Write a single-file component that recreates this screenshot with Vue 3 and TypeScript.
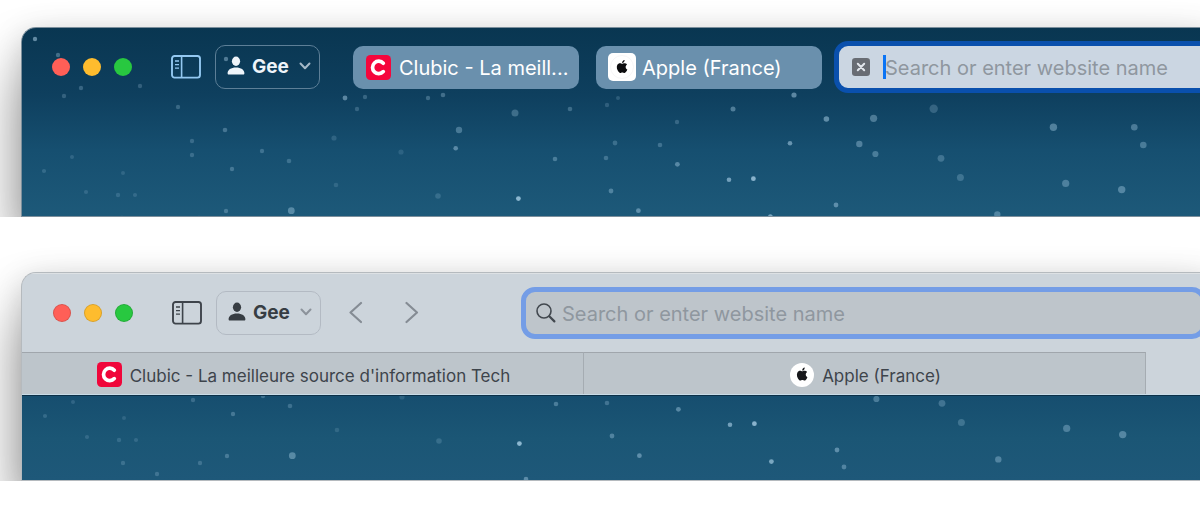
<script setup lang="ts">
interface Star {
  x: number
  y: number
  r: number
  o: number
}

const lights: { name: string; tone: string }[] = [
  { name: 'Close', tone: 'red' },
  { name: 'Minimise', tone: 'amber' },
  { name: 'Zoom', tone: 'green' },
]

const placeholder = 'Search or enter website name'

const applePath =
  'M12.152 6.896c-.948 0-2.415-1.078-3.96-1.04-2.04.027-3.91 1.183-4.961 3.014-2.117 3.675-.546 9.103 1.519 12.09 1.013 1.454 2.208 3.09 3.792 3.039 1.52-.065 2.09-.987 3.935-.987 1.831 0 2.35.987 3.96.948 1.637-.026 2.676-1.48 3.676-2.948 1.156-1.688 1.636-3.325 1.662-3.415-.039-.013-3.182-1.221-3.22-4.857-.026-3.04 2.48-4.494 2.597-4.559-1.429-2.09-3.623-2.324-4.39-2.376-2-.156-3.675 1.09-4.61 1.09zM15.53 3.83c.843-1.012 1.4-2.427 1.245-3.83-1.207.052-2.662.805-3.532 1.818-.78.896-1.454 2.338-1.273 3.714 1.338.104 2.715-.688 3.559-1.701'

const coords: [number, number, number, number][] = [
  [35, 39, 2.2, 0.5], [58, 55, 2.2, 0.32], [81, 88, 2.2, 0.25], [64, 96, 2.2, 0.22], [140, 86, 2.2, 0.22],
  [178, 107, 2.2, 0.24], [226, 59, 2.2, 0.4], [225, 130, 2.3, 0.3], [192, 141, 2.2, 0.22], [192, 155, 2.2, 0.22],
  [72, 157, 2, 0.16], [44, 171, 2.1, 0.18], [123, 173, 2, 0.15], [86, 192, 2.1, 0.16], [118, 195, 2.2, 0.17],
  [135, 195, 2.1, 0.16], [262, 151, 2.2, 0.25], [289, 161, 2.3, 0.24], [232, 169, 2.2, 0.28], [226, 211, 2.2, 0.28],
  [291.3, 210.7, 3.4, 0.38], [345, 98, 2.4, 0.45], [365, 97, 2.2, 0.24], [357, 109, 2.2, 0.22], [334, 138, 2.6, 0.17],
  [336, 185, 2.3, 0.15], [428, 98, 2.2, 0.27], [443, 95, 2.3, 0.3], [401, 152, 2.6, 0.14], [515, 113, 3.5, 0.27],
  [459, 130, 3.2, 0.32], [455.7, 148.3, 2.3, 0.42], [438, 196, 2.8, 0.18], [518.4, 198.6, 2.4, 0.72], [555, 159, 2.3, 0.32],
  [570, 109, 2.3, 0.27], [607, 105, 2.2, 0.19], [618, 98, 2, 0.18], [615, 143, 2.4, 0.24], [606, 158, 2.3, 0.26],
  [611, 191, 2.4, 0.34], [638.4, 210.7, 2.4, 0.42], [660, 145, 2.3, 0.26], [677, 122, 2.2, 0.22], [677.4, 164.3, 2.4, 0.4],
  [733, 109, 2.5, 0.38], [794, 95, 2.6, 0.46], [826.4, 119, 2.8, 0.47], [790, 143.3, 2.3, 0.5], [729, 179.7, 2.3, 0.56],
  [753.4, 178.7, 2.4, 0.7], [873.6, 118.3, 3.6, 0.35], [859.3, 144, 3.2, 0.36], [875.4, 154, 3.1, 0.32], [836, 205, 2.4, 0.42],
  [770.4, 216.6, 2.4, 0.6], [933.7, 108.7, 4.2, 0.22], [941, 158.3, 3.4, 0.26], [960.4, 177.4, 3.5, 0.24], [997.3, 214.4, 3.2, 0.34],
  [1053.4, 127.3, 3.7, 0.38], [1065.7, 183.4, 3.6, 0.33], [1121.7, 189.6, 3.7, 0.37], [1134.3, 127.3, 3.3, 0.34], [1143.3, 145, 3.3, 0.32],
  [1134, 90, 3, 0.3], [122, 218, 2.2, 0.2], [199, 218, 2.2, 0.22], [156, 229, 2.2, 0.22], [525, 234, 2.3, 0.4], [843, 222, 2.4, 0.34],
]

const stars: Star[] = coords.map(([x, y, r, o]) => ({ x, y, r, o }))
</script>

<template>
  <main class="page">
    <section class="shot" aria-label="Compact tab layout">
      <div class="window dark">
        <svg class="stars" aria-hidden="true">
          <g transform="translate(-22 -28)">
            <circle v-for="(s, i) in stars" :key="i" :cx="s.x" :cy="s.y" :r="s.r" :opacity="s.o" />
          </g>
        </svg>
        <header class="toolbar">
          <div class="lights">
            <button v-for="l in lights" :key="l.name" type="button" class="light" :class="l.tone" :aria-label="l.name"></button>
          </div>
          <button type="button" class="icon-button sidebar" aria-label="Show sidebar">
            <svg width="30" height="24" viewBox="0 0 30 24" fill="none" stroke="currentColor">
              <rect x="1" y="1" width="28" height="21.6" rx="2.6" stroke-width="1.9" />
              <path d="M10.6 1v21.6" stroke-width="1.6" />
              <path d="M4 6h4M4 9.6h4M4 13.2h4" stroke-width="1.3" />
            </svg>
          </button>
          <button type="button" class="profile">
            <svg class="person" width="18" height="20" viewBox="0 0 18 20" fill="currentColor">
              <ellipse cx="9" cy="5.2" rx="4.1" ry="4.7" />
              <path d="M.6 17.2C.6 13.6 4 11.4 9 11.4s8.400 2.200 8.400 5.800c0 .9-.4 1.300-1.200 1.300H1.800c-.8 0-1.200-.4-1.200-1.300z" />
            </svg>
            <span>Gee</span>
            <svg class="caret-down" width="12" height="8" viewBox="0 0 12 8" fill="none" stroke="currentColor" stroke-width="2" stroke-linecap="round" stroke-linejoin="round">
              <path d="M1.500 1.500L6 6.200L10.500 1.500" />
            </svg>
          </button>
          <nav class="pills" aria-label="Tabs">
            <button type="button" class="pill">
              <svg class="favicon" width="25" height="25" viewBox="0 0 25 25">
                <rect width="25" height="25" rx="4.500" fill="#f5063c" />
                <path d="M17.300 8.200A6.200 6.200 0 1 0 17.300 16.600" fill="none" stroke="#fff" stroke-width="3.700" stroke-linecap="round" />
              </svg>
              <span>Clubic - La meill...</span>
            </button>
            <button type="button" class="pill apple">
              <svg class="favicon" width="28" height="28" viewBox="0 0 28 28">
                <rect width="28" height="28" rx="5" fill="#fff" />
                <circle cx="14" cy="14" r="11.500" fill="none" stroke="#f0f0f2" stroke-width=".6" />
                <path transform="translate(7.600 7) scale(.54)" :d="applePath" fill="#0c0c0e" />
              </svg>
              <span>Apple (France)</span>
            </button>
          </nav>
          <div class="field compact">
            <button type="button" class="clear" aria-label="Close tab">
              <svg width="18" height="18" viewBox="0 0 18 18">
                <rect width="18" height="18" rx="3.200" fill="#686c73" />
                <path d="M5.800 5.800l6.400 6.400M12.200 5.800l-6.400 6.400" stroke="#e2e6ec" stroke-width="2" stroke-linecap="round" />
              </svg>
            </button>
            <span class="insertion" aria-hidden="true"></span>
            <input type="text" :placeholder="placeholder" aria-label="Address in compact window" />
          </div>
        </header>
      </div>
    </section>

    <section class="shot second" aria-label="Separate tab layout">
      <div class="window pale">
        <header class="toolbar">
          <div class="lights">
            <button v-for="l in lights" :key="l.name" type="button" class="light" :class="l.tone" :aria-label="l.name"></button>
          </div>
          <button type="button" class="icon-button sidebar" aria-label="Show sidebar">
            <svg width="30" height="24" viewBox="0 0 30 24" fill="none" stroke="currentColor">
              <rect x="1" y="1" width="28" height="21.600" rx="2.600" stroke-width="1.900" />
              <path d="M10.600 1v21.600" stroke-width="1.600" />
              <path d="M4 6h4M4 9.600h4M4 13.200h4" stroke-width="1.300" />
            </svg>
          </button>
          <button type="button" class="profile">
            <svg class="person" width="18" height="20" viewBox="0 0 18 20" fill="currentColor">
              <ellipse cx="9" cy="5.200" rx="4.100" ry="4.700" />
              <path d="M.6 17.200C.6 13.600 4 11.400 9 11.400s8.400 2.200 8.400 5.800c0 .9-.4 1.300-1.200 1.300H1.800c-.8 0-1.200-.4-1.200-1.300z" />
            </svg>
            <span>Gee</span>
            <svg class="caret-down" width="12" height="8" viewBox="0 0 12 8" fill="none" stroke="currentColor" stroke-width="2" stroke-linecap="round" stroke-linejoin="round">
              <path d="M1.500 1.500L6 6.200L10.500 1.500" />
            </svg>
          </button>
          <div class="history">
            <button type="button" class="icon-button" aria-label="Back">
              <svg width="14" height="24" viewBox="0 0 14 24" fill="none" stroke="currentColor" stroke-width="2.200" stroke-linecap="round" stroke-linejoin="round">
                <path d="M12 2L1.500 11.500L12 21" />
              </svg>
            </button>
            <button type="button" class="icon-button" aria-label="Forward">
              <svg width="14" height="24" viewBox="0 0 14 24" fill="none" stroke="currentColor" stroke-width="2.200" stroke-linecap="round" stroke-linejoin="round">
                <path d="M1.500 2L12 11.500L1.500 21" />
              </svg>
            </button>
          </div>
          <div class="field wide">
            <svg width="20" height="20" viewBox="0 0 20 20" fill="none" stroke="#42484f" stroke-linecap="round" aria-hidden="true">
              <circle cx="8" cy="8" r="7" stroke-width="1.600" />
              <path d="M13.300 13.300L18.400 18.400" stroke-width="2.200" />
            </svg>
            <input type="text" :placeholder="placeholder" aria-label="Address in separate window" />
          </div>
        </header>
        <nav class="tab-row" aria-label="Tabs">
          <button type="button" class="tab">
            <svg width="25" height="25" viewBox="0 0 25 25">
              <rect width="25" height="25" rx="4.500" fill="#f0063a" />
              <path d="M17.300 8.200A6.200 6.200 0 1 0 17.300 16.600" fill="none" stroke="#fff" stroke-width="3.700" stroke-linecap="round" />
            </svg>
            <span>Clubic - La meilleure source d'information Tech</span>
          </button>
          <button type="button" class="tab">
            <svg width="24" height="24" viewBox="0 0 24 24">
              <circle cx="12" cy="12" r="12" fill="#fff" />
              <path transform="translate(5.700 4.600) scale(.54)" :d="applePath" fill="#17181b" />
            </svg>
            <span>Apple (France)</span>
          </button>
        </nav>
        <div class="sky">
          <svg class="stars" aria-hidden="true">
            <g transform="translate(-21 -151)">
              <circle v-for="(s, i) in stars" :key="i" :cx="s.x" :cy="s.y" :r="s.r" :opacity="s.o" />
            </g>
          </svg>
        </div>
      </div>
    </section>
  </main>
</template>

<style>
body {
  margin: 0;
  background: #fff;
}
</style>

<style scoped>
.page {
  font-family: Inter, "Liberation Sans", sans-serif;
  overflow: hidden;
  padding-bottom: 35px;
}

.page *,
.page {
  box-sizing: border-box;
}

svg {
  display: block;
  flex: none;
}

button {
  font: inherit;
  color: inherit;
  background: none;
  border: 0;
  padding: 0;
  margin: 0;
}

.shot {
  overflow: hidden;
  padding: 27px 0 0 21px;
}

.shot.second {
  padding-top: 55px;
}

.window {
  position: relative;
  margin-right: -12px;
  border-radius: 15px 0 0 0;
  overflow: hidden;
  box-shadow: 0 40px 60px rgba(0, 0, 0, 0.42), 0 6px 30px rgba(0, 0, 0, 0.15);
}

.dark {
  border: 1px solid #7c8f9c;
  border-right: 0;
  min-height: 190px;
  background: linear-gradient(#093651, #0e3f5e 35%, #164f70 65%, #1d5979);
}

.stars {
  position: absolute;
  inset: 0;
  width: 100%;
  height: 100%;
  fill: #b9dcf2;
}

.toolbar {
  position: relative;
  display: flex;
  align-items: center;
  height: 78px;
  padding-left: 30px;
}

.lights {
  display: flex;
  gap: 13px;
  margin-right: 39px;
}

.light {
  width: 18px;
  height: 18px;
  border-radius: 50%;
}

.red {
  background: #ff5f57;
}

.amber {
  background: #febc2e;
}

.green {
  background: #28c840;
}

.pale .light {
  border: 1px solid rgba(0, 0, 0, 0.14);
}

.sidebar {
  color: #93c8f1;
}

.profile {
  display: flex;
  align-items: center;
  height: 44px;
  width: 105px;
  flex: none;
  margin-left: 14px;
  padding: 0 8px 2px 11px;
  border: 1px solid #5d7f97;
  border-radius: 10px;
  font-size: 19px;
  font-weight: 700;
  color: #eef4fa;
}

.person {
  margin-right: 7px;
}

.caret-down {
  margin-left: auto;
  color: #a5b9c8;
}

.pills {
  display: flex;
  gap: 17px;
  margin-left: 33px;
}

.pill {
  display: flex;
  align-items: center;
  gap: 8px;
  width: 226px;
  height: 43px;
  padding-left: 13px;
  border-radius: 10px;
  background: #6a90ad;
  color: #fff;
  font-size: 20px;
  white-space: nowrap;
}

.pill span {
  padding-top: 2px;
}

.pill.apple {
  gap: 6px;
  padding-left: 12px;
}

.field {
  display: flex;
  align-items: center;
  flex: 1;
  min-width: 0;
  height: 52px;
  border: 5px solid #0a50ad;
  border-radius: 14px;
  background: #cbd6e2;
}

.field input {
  flex: 1;
  min-width: 0;
  border: 0;
  outline: 0;
  padding: 2px 0 0;
  background: none;
  font: inherit;
  font-size: 20px;
  color: #30353b;
}

.field input::placeholder {
  color: #8f979f;
  opacity: 1;
}

.compact {
  margin-left: 12px;
  margin-right: -20px;
  padding-left: 13px;
}

.insertion {
  width: 3px;
  height: 24px;
  margin-left: 13px;
  margin-right: -1px;
  background: #0a74f5;
}

.pale {
  border: 1px solid #b5babe;
  border-right: 0;
  background: #ccd4db;
}

.pale .toolbar {
  height: 79px;
  padding-left: 31px;
  border-top: 1px solid #dde1e4;
}

.pale .sidebar {
  color: #3e444b;
}

.pale .profile {
  border-color: #b3bac3;
  color: #373d43;
}

.pale .caret-down {
  color: #8c939b;
}

.history {
  display: flex;
  gap: 42px;
  margin-left: 28px;
  color: #858c94;
}

.wide {
  margin-left: 102px;
  margin-right: 6px;
  padding-left: 10px;
  gap: 6px;
  border-color: #749de6;
  background: #bec5cb;
}

.tab-row {
  display: flex;
  height: 43px;
  border-bottom: 1px solid #c8dce8;
}

.tab {
  display: flex;
  align-items: center;
  justify-content: center;
  gap: 8px;
  flex: 0 0 562px;
  padding: 2px 0 0 2px;
  border-top: 1px solid #a0a6ac;
  border-right: 1px solid #a5acb2;
  background: #bdc5cb;
  color: #3d444b;
  font-size: 17px;
  white-space: nowrap;
}

.tab span {
  padding-top: 2px;
}

.sky {
  position: relative;
  height: 85px;
  border-top: 1px solid #0c3048;
  background: linear-gradient(#164e6f, #1b5675 50%, #1e5879);
}
</style>
